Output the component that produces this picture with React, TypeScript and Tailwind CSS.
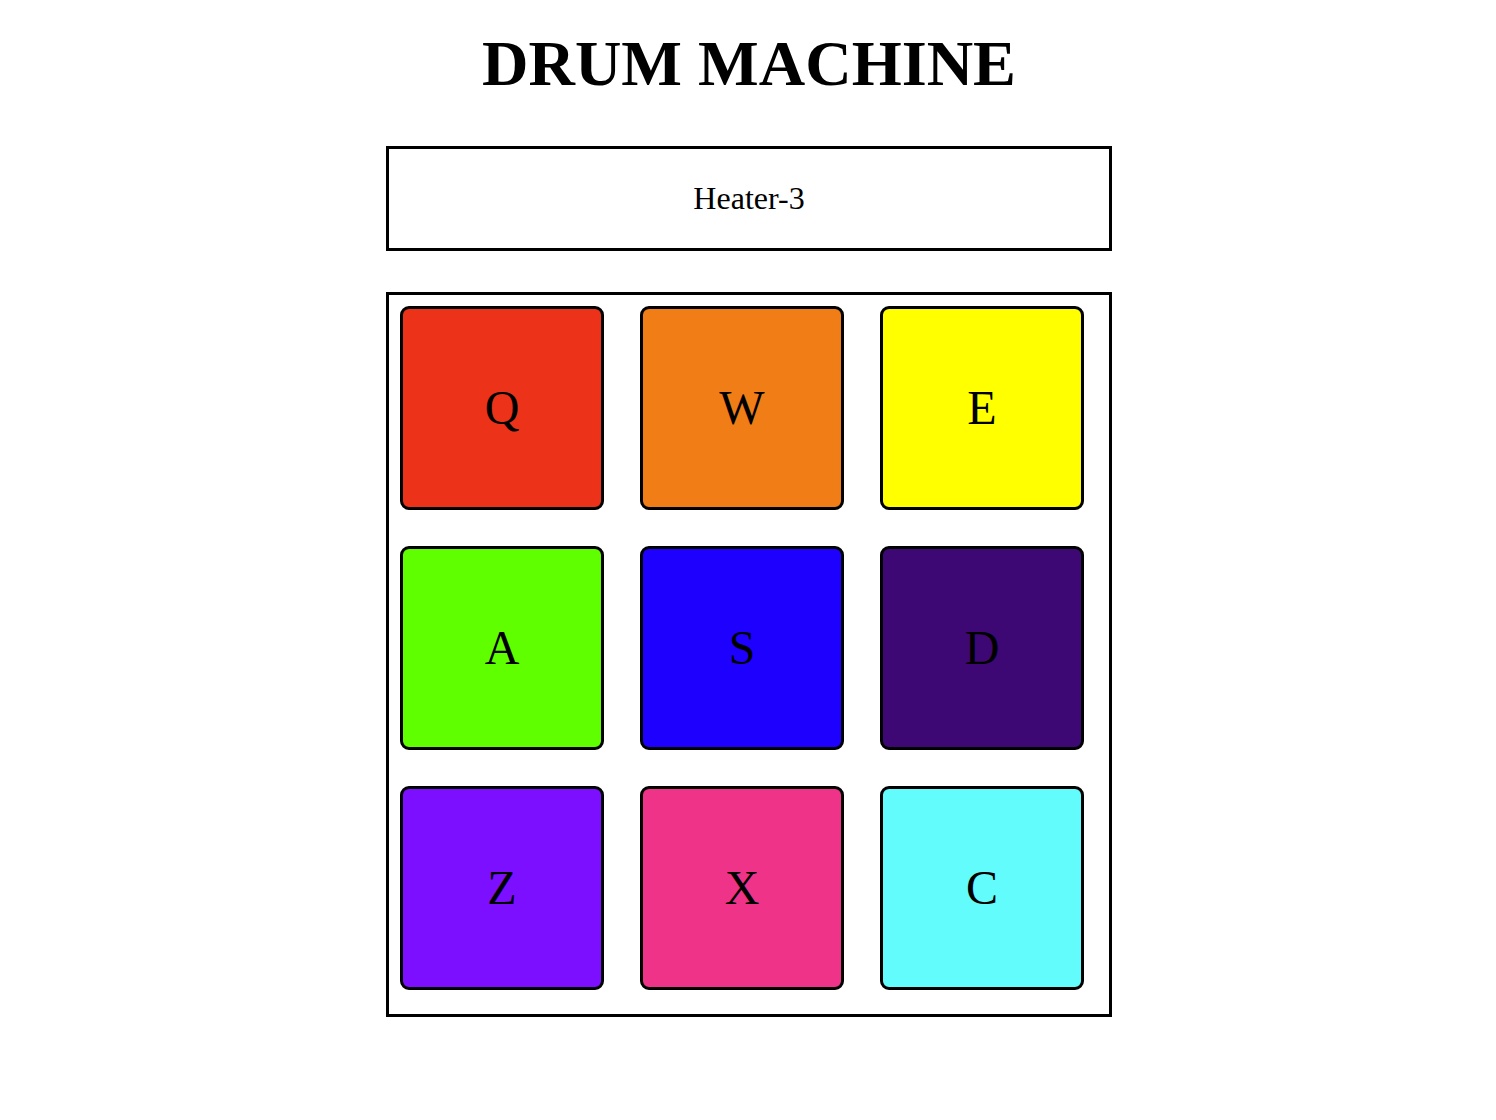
const PADS = [
  { key: "Q", color: "bg-[#ec3319]" },
  { key: "W", color: "bg-[#f07d16]" },
  { key: "E", color: "bg-[#ffff00]" },
  { key: "A", color: "bg-[#5fff00]" },
  { key: "S", color: "bg-[#1e00ff]" },
  { key: "D", color: "bg-[#3d0873]" },
  { key: "Z", color: "bg-[#7c0fff]" },
  { key: "X", color: "bg-[#ee3389]" },
  { key: "C", color: "bg-[#62fcfc]" },
];

function DrumPad({ label, color }: { label: string; color: string }) {
  return (
    <button
      className={`${color} w-[204px] h-[204px] border-[3px] border-black rounded-[9px] flex items-center justify-center text-[48px] text-black cursor-pointer`}
    >
      {label}
    </button>
  );
}

export default function App() {
  return (
    <div
      className="min-h-screen bg-white text-black flex flex-col items-center pl-[2px]"
      style={{ fontFamily: '"Liberation Serif", "Times New Roman", serif' }}
    >
      <h1 className="pt-[32px] text-[64.3px] leading-[64px] font-bold">DRUM MACHINE</h1>

      <div className="mt-[50px] w-[726px] h-[105px] border-[3px] border-black flex items-center justify-center pb-[2px] text-[32px]">
        Heater-3
      </div>

      <div className="mt-[41px] w-[726px] border-[3px] border-black grid grid-cols-3 gap-[36px] pl-[11px] pr-[25px] pt-[11px] pb-[24px]">
        {PADS.map((p) => (
          <DrumPad key={p.key} label={p.key} color={p.color} />
        ))}
      </div>
    </div>
  );
}
